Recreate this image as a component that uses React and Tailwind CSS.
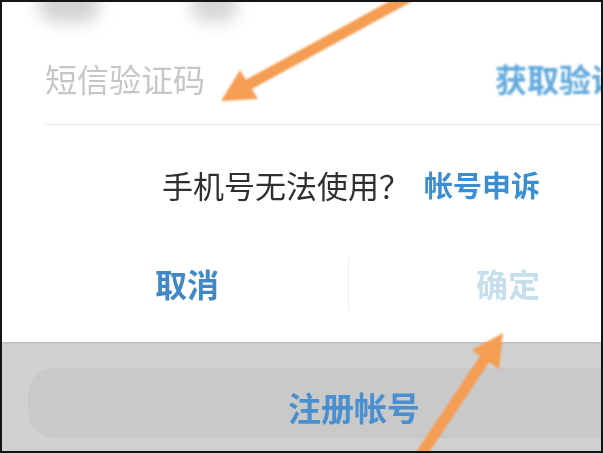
import React from 'react';

const font = { fontFamily: '"Noto Sans CJK SC", "Noto Sans", sans-serif' };

const Arrows = () => (
  <svg
    className="absolute left-[-2px] top-[-2px] w-[603px] h-[453px] pointer-events-none blur-[1px]"
    viewBox="0 0 603 453"
  >
    {/* top arrow, pointing at the code field */}
    <line x1="414" y1="-6" x2="246" y2="86" stroke="#f59d52" strokeWidth="11" strokeLinecap="round" />
    <polygon points="221,101 240,70 258,99" fill="#f59d52" />
    {/* bottom arrow, pointing at the confirm button */}
    <line x1="416" y1="462" x2="488" y2="354" stroke="#f59d52" strokeWidth="11" strokeLinecap="round" />
    <polygon points="503,333 472,350 499,369" fill="#f59d52" />
  </svg>
);

const App = () => {
  return (
    <div
      className="relative w-[603px] h-[453px] overflow-hidden border-2 border-[#141414] bg-[#d1d1d1]"
      style={font}
    >
      <div className="bg-white pb-[32px] shadow-sm">
        {/* blurred phone number above */}
        <div className="h-[38px] flex items-start pl-[36px] gap-[90px]">
          <div className="w-[62px] h-[34px] -mt-[14px] rounded-full bg-[#d2d2d2] blur-[8px]" />
          <div className="w-[48px] h-[34px] -mt-[14px] rounded-full bg-[#d6d6d6] blur-[8px]" />
        </div>

        {/* sms code row */}
        <div className="flex items-center pt-[22px] pb-[30px] pl-[43px] whitespace-nowrap">
          <span className="text-[32px] leading-none text-[#c6c6c6] blur-[0.5px]">短信验证码</span>
          <span className="ml-[290px] shrink-0 text-[32px] leading-none font-bold text-[#62a9dc] blur-[1px]">
            获取验证码
          </span>
        </div>
        <div className="ml-[43px] border-b border-[#e6e6e6]" />

        {/* phone unusable hint */}
        <div className="flex items-center pt-[44px] pl-[160px] whitespace-nowrap">
          <span className="text-[31px] leading-none text-[#2f2f2f] blur-[0.4px]">手机号无法使用？</span>
          <span className="ml-[14px] text-[29px] leading-none font-bold text-[#3a8ed4] blur-[0.5px]">帐号申诉</span>
        </div>

        {/* buttons */}
        <div className="flex items-center h-[52px] mt-[58px]">
          <div className="w-[346px] pl-[153px]">
            <span className="text-[32px] leading-none font-bold text-[#4188c6] blur-[0.5px]">取消</span>
          </div>
          <div className="w-px h-[52px] bg-[#ececec]" />
          <div className="pl-[127px]">
            <span className="text-[32px] leading-none font-bold text-[#c7dfed] blur-[0.5px]">确定</span>
          </div>
        </div>
      </div>

      {/* register button */}
      <div className="mt-[26px] ml-[26px] mr-[-40px] h-[70px] rounded-[26px] bg-[#c9c9c9] flex items-center pt-[8px] pl-[260px]">
        <span className="text-[33px] leading-none font-bold text-[#4a8fcf] blur-[0.5px]">注册帐号</span>
      </div>

      <Arrows />
    </div>
  );
};

export default App;
